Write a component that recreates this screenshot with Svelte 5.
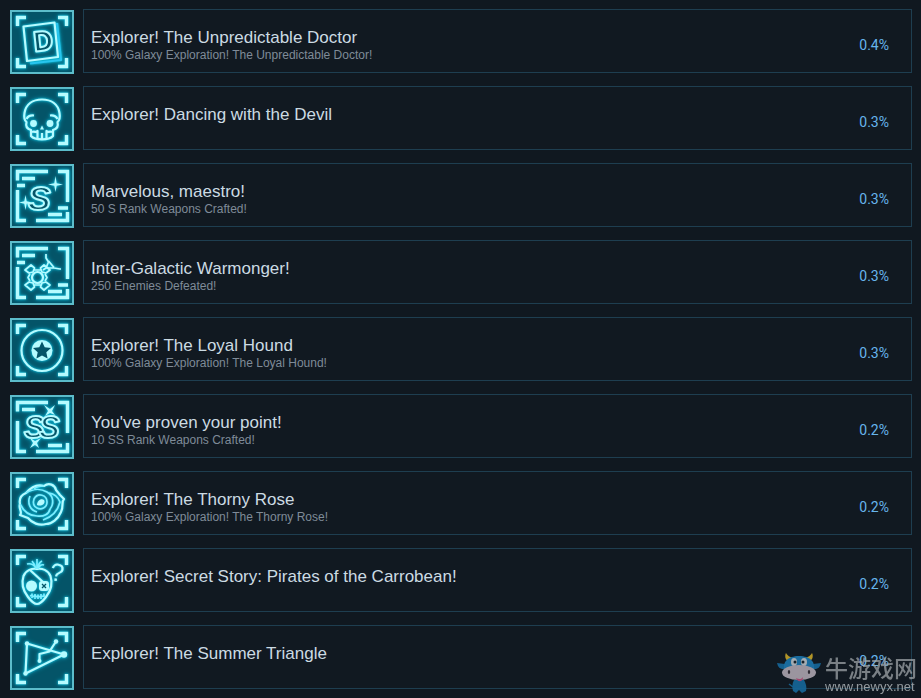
<script>
	const achievements = [
		{
			icon: 'card',
			title: 'Explorer! The Unpredictable Doctor',
			text: '100% Galaxy Exploration! The Unpredictable Doctor!',
			percent: '0.4%'
		},
		{ icon: 'skull', title: 'Explorer! Dancing with the Devil', text: '', percent: '0.3%' },
		{ icon: 's', title: 'Marvelous, maestro!', text: '50 S Rank Weapons Crafted!', percent: '0.3%' },
		{ icon: 'gear', title: 'Inter-Galactic Warmonger!', text: '250 Enemies Defeated!', percent: '0.3%' },
		{
			icon: 'star',
			title: 'Explorer! The Loyal Hound',
			text: '100% Galaxy Exploration! The Loyal Hound!',
			percent: '0.3%'
		},
		{ icon: 'ss', title: "You've proven your point!", text: '10 SS Rank Weapons Crafted!', percent: '0.2%' },
		{
			icon: 'rose',
			title: 'Explorer! The Thorny Rose',
			text: '100% Galaxy Exploration! The Thorny Rose!',
			percent: '0.2%'
		},
		{
			icon: 'carrot',
			title: 'Explorer! Secret Story: Pirates of the Carrobean!',
			text: '',
			percent: '0.2%'
		},
		{ icon: 'triangle', title: 'Explorer! The Summer Triangle', text: '', percent: '0.2%' }
	];

	// these icons have the broken frame, the others have plain corners
	const framed = ['s', 'gear', 'ss'];
</script>

<main class="page">
	<ul class="list">
		{#each achievements as item (item.title)}
			<li class="row">
				<svg class="icon" viewBox="0 0 64 64" aria-hidden="true">
					<rect class="tile" x="1" y="1" width="62" height="62" />
					<g class="glow">
						{#if framed.includes(item.icon)}
							<path class="frame" d="M7.5 16.5V7.5H38M48 7.5H57.5V38M7.5 26V56.5H16M26 56.5H57.5V48M12 14.5H25M38 50.5H52" />
							{#if item.icon !== 'ss'}
								<path class="frame" d="M7 21.5H15M48 44H58" />
							{/if}
						{:else}
							<path class="frame" d="M7.5 16V7.5H16M48 7.5H56.5V16M7.5 48V56.5H16M48 56.5H56.5V48" />
						{/if}

						{#if item.icon === 'card'}
							<path class="edge" d="M47 13L51 50L20 53.500" />
							<path d="M13.5 16.5L44.5 12.5L48 47L17 51Z" />
							<text class="letter narrow" x="23" y="41" font-size="27" transform="rotate(-6 31 32)">D</text>
						{:else if item.icon === 'skull'}
							<path d="M21 43C17 42 15.500 39 16.500 35C14 33 14 29 14.500 26C16 17 23 12.500 32 12.500S48 17 49.500 26C50 29 50 33 47.500 35C48.500 39 47 42 43 43V49C39 53.500 25 53.500 21 49Z" />
							<path d="M16.500 32C18 29 20 28 24 28.500M47.500 32C46 29 44 28 40 28.500M22 45C25 44 26 46 27.500 44V51M42 45C39 44 38 46 36.500 44V51M32 46V52" />
							<circle class="solid" cx="23.500" cy="36.500" r="3.400" />
							<circle class="solid" cx="40" cy="36.500" r="3.400" />
							<path class="solid" d="M32 38.500L34 42.500H30Z" />
						{:else if item.icon === 's'}
							<text class="letter slant" x="18" y="46" font-size="34">S</text>
							<path class="solid" d="M45.500 12L46.700 19.300L53 20.500L46.700 21.700L45.500 28L44.300 21.700L38 20.500L44.300 19.300ZM15.500 31L16.700 37.300L22 38.500L16.700 39.700L15.500 46L14.300 39.700L9 38.500L14.300 37.300Z" />
						{:else if item.icon === 'gear'}
							<path class="fine" d="M23 31L19 32L15 29L21 24L24.500 27L23 31ZM32 31L36 32L40 29L34 24L30.500 27L32 31ZM23 42L19 41L15 44L21 49L24.500 46L23 42ZM32 42L36 41L40 44L34 49L30.500 46L32 42ZM20 33L18 36.500L20 40M35 33L37 36.500L35 40M24.500 29H30.500M24.500 44H30.500" />
							<circle cx="27.500" cy="36.500" r="5.500" />
							<path class="fine" d="M36 13V17L38.500 21L36 27L44 27L50 28H51M38.500 20L44 26.500M36 27L33 29" />
						{:else if item.icon === 'star'}
							<circle cx="32" cy="32.500" r="20.500" />
							<circle class="solid" cx="32" cy="32.500" r="10.500" />
							<path class="hole" d="M32 23.500L34.700 29.300L41 30L36.300 34.300L37.600 40.500L32 37.400L26.400 40.500L27.700 34.300L23 30L29.300 29.300Z" />
						{:else if item.icon === 'ss'}
							<text class="letter slant" x="14 29" y="43" font-size="31">SS</text>
							<path class="solid" d="M34 10L40 14L45 10L42 16L45 20L40 18L35 21L38 16ZM20 43L25 46L31 43L27 48L29 53L25 50L20 53L23 48Z" />
						{:else if item.icon === 'rose'}
							<path d="M16 21C22 14 28 12 34 14C39 10 45 13 46 18L50 23L54 27C51 30 54 34 51 40C48 47 42 52 36 52C29 54 22 51 18 46L10 43C13 40 8 37 10 32C9 27 11 23 16 21Z" />
							<path class="petal" d="M16 21C24 16 32 17 37 20C44 24 44 32 40 37M34 14C29 14 26 15 24 17M10 32C14 40 19 44 27 44C34 45 39 42 40 37M20 24C17 31 20 38 27 40M24 27C28 20 37 23 37 30C37 36 31 38 27 36C23 34 23 30 24 27ZM39 21C45 22 48 25 50 30C48 38 42 45 33 48" />
							<path class="solid" d="M27 33C27 29 31 26 34 28C36 31 32 35 27 33Z" />
						{:else if item.icon === 'carrot'}
							<path d="M27 20C22 19 16 21 13.500 27C11 35 14 43 18 48C21 52 24 55 27 55C30 55 33 52 36 48C40 43 43 35 40.500 27C38 21 32 19 27 20Z" />
							<path class="petal" d="M26 20C25 16 21 14 17 15M26 20C25 16 23 13 22 12M27 20V10M28 20C28 16 30 13 32 12M28 20C29 17 31 15 34 16" />
							<path d="M20 21L33 33" />
							<circle class="solid" cx="21.500" cy="37" r="5.500" />
							<rect class="solid" x="29" y="32" width="10" height="10" rx="3" />
							<path class="cut" d="M32 35L36 39M36 35L32 39" />
							<path class="petal" d="M20 46.500C24 48 31 48 35 46.500M22 44.500V49M25 45V50M28 45.500V50M31 45V50M34 44.500V48" />
							<text class="question" x="40" y="32" font-size="25" transform="rotate(8 46 24)">?</text>
						{:else if item.icon === 'triangle'}
							<path d="M17 17.500L54 28.500L15.500 47.500ZM46 15.500L39.500 25.500L29.500 28V35" />
							<circle class="solid" cx="17" cy="17.500" r="2.200" />
							<circle class="solid" cx="46" cy="15.500" r="2.200" />
							<circle class="solid" cx="54" cy="28.500" r="3.200" />
							<circle class="solid" cx="15.500" cy="47.500" r="2.200" />
							<circle class="solid" cx="29.500" cy="35" r="2" />
						{/if}
					</g>
				</svg>

				<div class="box">
					<div class="info">
						<h3>{item.title}</h3>
						{#if item.text}
							<p>{item.text}</p>
						{/if}
					</div>
					<span class="percent">{item.percent}</span>
				</div>
			</li>
		{/each}
	</ul>

	<!-- SITE MARK, LIES OVER THE LAST ROW -->
	<div class="site-mark">
		<svg class="cow" viewBox="0 0 44 42" aria-hidden="true">
			<path d="M17 28H27C29 32 30 35 29 39L25 41L22 38L19 41L16 39C15 35 15 32 17 28Z" fill="#16679a" />
			<path d="M13 9C7 9 8 2 9 1C11 5 15 5 16 7M31 9C37 9 36 2 35 1C33 5 29 5 28 7" fill="#c4a329" />
			<path d="M8 12L0 11C1 16 4 18 9 17M36 12L44 11C43 16 40 18 35 17" fill="#16679a" />
			<path d="M8 21C4 10 11 4 22 4S40 10 36 21Z" fill="#1c76ad" />
			<ellipse cx="17" cy="10" rx="3" ry="4" fill="#b5bdc2" />
			<ellipse cx="27" cy="10" rx="3" ry="4" fill="#b5bdc2" />
			<circle cx="18" cy="10" r="1.500" fill="#18232b" />
			<circle cx="26" cy="10" r="1.500" fill="#18232b" />
			<ellipse cx="22" cy="20.500" rx="17" ry="7.500" fill="#aaa3ad" />
			<ellipse cx="12" cy="20" rx="1.200" ry="2" fill="#332f37" />
			<ellipse cx="32" cy="20" rx="1.200" ry="2" fill="#332f37" />
			<path d="M19 26C22 28 25 27 26 25C26 30 21 31 19 26Z" fill="#b54b78" />
			<path d="M16 35L12 32" fill="none" stroke="#16679a" stroke-width="1.500" />
		</svg>
		<div class="site-name">
			<strong>牛游戏网</strong>
			<span>www.newyx.net</span>
		</div>
	</div>
</main>

<style>
	:global(body) {
		margin: 0;
		background: #101820;
	}

	.page {
		position: relative;
		padding: 9px 9px 9px 10px;
		font-family: 'Liberation Sans', Arial, sans-serif;
	}

	.list {
		display: flex;
		flex-direction: column;
		gap: 13px;
		margin: 0;
		padding: 0;
		list-style: none;
	}

	.row {
		display: flex;
		align-items: flex-start;
		gap: 9px;
	}

	/* ICONS */
	.icon {
		flex: none;
		width: 64px;
		height: 64px;
		margin: 1px 0 -1px;
	}

	.tile {
		fill: #045468;
		stroke: #5dbdcb;
		stroke-width: 2;
	}

	.glow {
		fill: none;
		stroke: #b5fbff;
		stroke-width: 2.2;
		stroke-linejoin: round;
		filter: drop-shadow(0 0 1px #12c9e8) drop-shadow(0 0 2px #0793ae);
	}

	.frame {
		stroke-width: 3.4;
		stroke-linejoin: miter;
	}

	.edge {
		stroke: #28c5ee;
	}

	.fine,
	.petal {
		stroke-width: 1.7;
	}

	.petal {
		stroke: #7deeff;
	}

	.solid {
		fill: #b5fbff;
		stroke: none;
	}

	.hole {
		fill: #045468;
		stroke: none;
	}

	.cut {
		stroke: #045468;
		stroke-width: 1.3;
	}

	.letter {
		font-family: 'Liberation Sans', sans-serif;
		font-weight: bold;
		fill: #045468;
		stroke-width: 2;
	}

	.narrow {
		font-family: 'Liberation Sans Narrow', 'DejaVu Sans Condensed', sans-serif;
	}

	.slant {
		font-style: italic;
	}

	.question {
		font-family: 'Liberation Sans', sans-serif;
		fill: #b5fbff;
		stroke: none;
	}

	/* TEXT BOX */
	.box {
		display: flex;
		flex: 1;
		justify-content: space-between;
		box-sizing: border-box;
		min-width: 0;
		min-height: 64px;
		padding: 17px 22px 0 7px;
		border: 1px solid #1e3e50;
		background: #111921;
	}

	h3 {
		margin: 0;
		font-size: 17px;
		font-weight: normal;
		line-height: 21px;
		color: #ccdbe3;
	}

	p {
		margin: 0;
		font-size: 12px;
		line-height: 14px;
		color: #7f8b98;
	}

	.percent {
		padding-top: 8px;
		font-family: Roboto, sans-serif;
		font-size: 14px;
		line-height: 20px;
		color: #67b5ec;
	}

	/* SITE MARK */
	.site-mark {
		position: absolute;
		right: 4px;
		bottom: 4px;
		display: flex;
		align-items: center;
		gap: 4px;
		opacity: 0.9;
	}

	.cow {
		width: 44px;
		height: 42px;
	}

	.site-name {
		display: flex;
		flex-direction: column;
		color: #a3a9ad;
	}

	.site-name strong {
		font-family: 'Noto Sans CJK SC', sans-serif;
		font-size: 23px;
		font-weight: 500;
		line-height: 26px;
		opacity: 0.8;
	}

	.site-name span {
		font-size: 13px;
		line-height: 13px;
	}
</style>
